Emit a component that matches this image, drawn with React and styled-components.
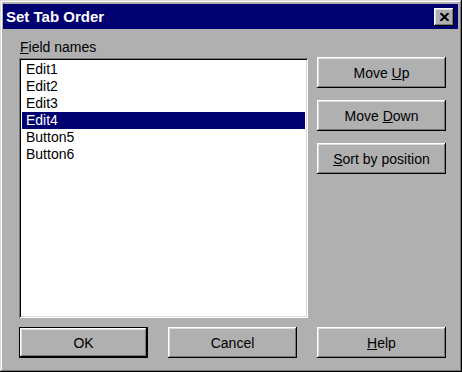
import React from "react";
import styled, { createGlobalStyle } from "styled-components";

const GlobalStyle = createGlobalStyle`
  html, body {
    margin: 0;
    padding: 0;
    background: #b0b0b0;
  }
  * {
    box-sizing: border-box;
  }
`;

const fields = ["Edit1", "Edit2", "Edit3", "Edit4", "Button5", "Button6"];

const App = () => {
  return (
    <>
      <GlobalStyle />
      <Window>
        <TitleBar>
          <Title>Set Tab Order</Title>
          <CloseButton aria-label="Close">
            <svg width="9" height="8" viewBox="0 0 9 8">
              <path d="M0.5 0 L8.5 8 M8.5 0 L0.5 8" stroke="#000" strokeWidth="2" />
            </svg>
          </CloseButton>
        </TitleBar>
        <Body>
          <Main>
            <ListColumn>
              <Label>
                <u>F</u>ield names
              </Label>
              <ListBox>
                {fields.map((name) => (
                  <Item key={name} selected={name === "Edit4"}>
                    {name}
                  </Item>
                ))}
              </ListBox>
            </ListColumn>
            <SideColumn>
              <Button>
                <Caption>
                  Move <u>U</u>p
                </Caption>
              </Button>
              <Button>
                <Caption>
                  Move <u>D</u>own
                </Caption>
              </Button>
              <Button>
                <Caption>
                  <u>S</u>ort by position
                </Caption>
              </Button>
            </SideColumn>
          </Main>
          <Footer>
            <Button isDefault>
              <Caption>OK</Caption>
            </Button>
            <Button>
              <Caption>Cancel</Caption>
            </Button>
            <Button>
              <Caption>
                <u>H</u>elp
              </Caption>
            </Button>
          </Footer>
        </Body>
      </Window>
    </>
  );
};

export default App;

const Window = styled.div`
  width: 462px;
  height: 372px;
  background: #b0b0b0;
  padding: 4px 4px 4px 3px;
  display: flex;
  flex-direction: column;
  box-shadow: inset -1px -1px #000, inset 1px 1px #dcdcdc,
    inset -2px -2px #787878, inset 2px 2px #fff;
  font-family: "Liberation Sans", Arial, sans-serif;
  font-size: 14px;
  color: #000;
`;

const TitleBar = styled.div`
  height: 25px;
  background: #000070;
  display: flex;
  align-items: center;
  justify-content: space-between;
  padding: 0 4px 0 3px;
`;

const Title = styled.div`
  color: #fff;
  font-weight: bold;
  font-size: 15px;
  line-height: 17px;
`;

const CloseButton = styled.div`
  width: 20px;
  height: 18px;
  background: #b0b0b0;
  display: flex;
  align-items: center;
  justify-content: center;
  box-shadow: inset -1px -1px #000, inset 1px 1px #fff,
    inset -2px -2px #787878, inset 2px 2px #dcdcdc;
`;

const Body = styled.div`
  flex: 1;
  display: flex;
  flex-direction: column;
  padding: 10px 12px 0 16px;
`;

const Main = styled.div`
  display: flex;
  gap: 9px;
`;

const ListColumn = styled.div`
  display: flex;
  flex-direction: column;
`;

const Label = styled.div`
  line-height: 16px;
  height: 16px;
  margin: 0 0 3px 1px;
`;

const ListBox = styled.div`
  width: 289px;
  height: 260px;
  background: #fff;
  padding: 3px;
  box-shadow: inset 1px 1px #787878, inset -1px -1px #fff,
    inset 2px 2px #000, inset -2px -2px #dcdcdc;
`;

const Item = styled.div`
  height: 17px;
  line-height: 17px;
  padding-left: 4px;
  background: ${(p) => (p.selected ? "#000070" : "transparent")};
  color: ${(p) => (p.selected ? "#fff" : "#000")};
`;

const SideColumn = styled.div`
  display: flex;
  flex-direction: column;
  gap: 12px;
  padding-top: 18px;
`;

const Button = styled.div`
  width: 129px;
  height: 31px;
  display: flex;
  align-items: center;
  justify-content: center;
  background: #b0b0b0;
  border: ${(p) => (p.isDefault ? "1px solid #000" : "none")};
  box-shadow: inset -1px -1px #000, inset 1px 1px #fff,
    inset -2px -2px #787878, inset 2px 2px #dcdcdc;
  line-height: 16px;
`;

const Caption = styled.span`
  white-space: pre;
`;

const Footer = styled.div`
  display: flex;
  justify-content: space-between;
  margin-top: 9px;
`;
